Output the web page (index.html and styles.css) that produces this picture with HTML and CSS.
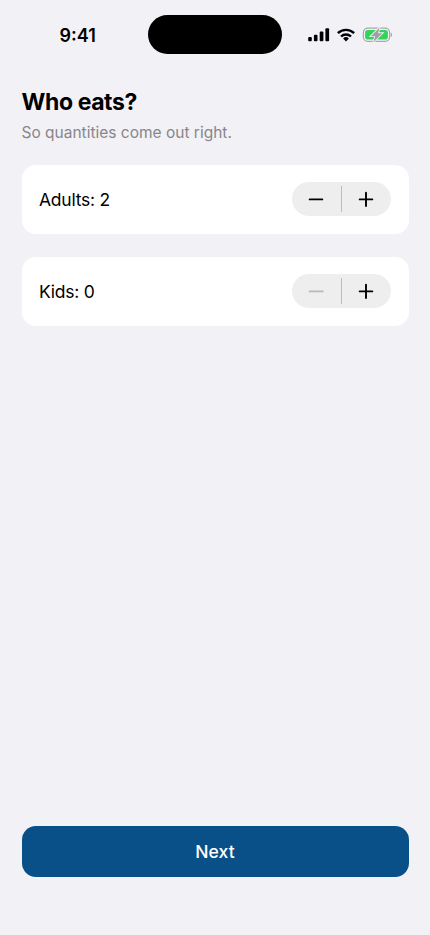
FILE: index.html
```html
<!DOCTYPE html>
<html lang="en">
<head>
<meta charset="utf-8">
<meta name="viewport" content="width=device-width, initial-scale=1">
<title>Who eats?</title>
<link rel="stylesheet" href="styles.css">
</head>
<body>
<div class="screen">
  <header class="status">
    <div class="clock"><span class="clock-text">9:41</span></div>
    <div class="island"></div>
    <svg class="indicators" width="88" height="16" viewBox="307 27 88 16">
      <g fill="#000">
        <rect x="308.2" y="37" width="3.6" height="4.2" rx="1"/>
        <rect x="313.9" y="34.8" width="3.6" height="6.4" rx="1"/>
        <rect x="319.7" y="31.6" width="3.7" height="9.6" rx="1"/>
        <rect x="325.4" y="28.2" width="3.7" height="13" rx="1"/>
      </g>
      <g fill="none" stroke="#000" stroke-width="2.4">
        <path d="M337.9 33.2a11.6 11.6 0 0 1 16.2 0"/>
        <path d="M341 36.5a7.2 7.2 0 0 1 10 0"/>
      </g>
      <path d="M343.1 38.5a4.2 4.2 0 0 1 5.8 0L346 41.4z"/>
      <rect x="363.4" y="28.2" width="26.2" height="13.1" rx="4.4" fill="none" stroke="#a9a8ad" stroke-width="1.2"/>
      <rect x="365.1" y="29.9" width="22.8" height="9.7" rx="2.8" fill="#34d15b"/>
      <path d="M390.7 32.5c1.9.7 1.9 3.9 0 4.6z" fill="#a9a8ad"/>
      <path d="M379.6 27.4L370.8 36.2H375.2L373.4 42.2L382.4 33.2H378z" fill="#a09fa4" stroke="#f2f1f6" stroke-width="1.7" paint-order="stroke"/>
    </svg>
  </header>
  <main class="content">
    <h1 class="title">Who eats?</h1>
    <p class="subtitle">So quantities come out right.</p>
    <section class="card">
      <span class="label adults">Adults: 2</span>
      <div class="stepper">
        <button class="step" aria-label="Fewer adults"><svg width="16" height="16" viewBox="0 0 16 16"><path d="M1.7 8.4H14.3"/></svg></button>
        <span class="divider"></span>
        <button class="step" aria-label="More adults"><svg width="16" height="16" viewBox="0 0 16 16"><path d="M1.7 8.4H14.3M8 1.8V15"/></svg></button>
      </div>
    </section>
    <section class="card">
      <span class="label kids">Kids: 0</span>
      <div class="stepper">
        <button class="step" aria-label="Fewer kids" disabled><svg width="16" height="16" viewBox="0 0 16 16"><path d="M1.5 8.4H14.8"/></svg></button>
        <span class="divider"></span>
        <button class="step" aria-label="More kids"><svg width="16" height="16" viewBox="0 0 16 16"><path d="M1.7 8.4H14.3M8 1.8V15"/></svg></button>
      </div>
    </section>
  </main>
  <button class="next">Next</button>
</div>
</body>
</html>
```
FILE: styles.css
```css
* { box-sizing: border-box; }
body {
  margin: 0;
  background: #f2f1f6;
  color: #000;
  font-family: Inter, "Liberation Sans", sans-serif;
}
button { border: 0; padding: 0; font-family: inherit; }
.screen {
  height: 935px;
  padding: 15px 21.5px 58px;
  display: flex;
  flex-direction: column;
}
.status {
  height: 39px;
  display: grid;
  grid-template-columns: 126.5px 134px 1fr;
  align-items: center;
}
.clock { padding: 2px 0 0 38px; }
.clock-text { font-size: 18px; font-weight: 600; letter-spacing: 0; }
.island { height: 39px; border-radius: 20px; background: #000; }
.indicators { margin-left: 25px; }
.content { flex: 1; padding-top: 33px; }
.title {
  margin: 0;
  font-size: 23px;
  line-height: 30px;
  font-weight: 700;
  letter-spacing: -0.4px;
}
.subtitle {
  margin: 5px 0 21px;
  font-size: 15.5px;
  line-height: 22px;
  color: #87868b;
}
.card {
  height: 68.5px;
  margin-bottom: 23.5px;
  padding: 0 17.5px;
  border-radius: 14px;
  background: #fff;
  display: flex;
  align-items: center;
  justify-content: space-between;
}
.label {
  padding-top: 2px;
  font-size: 17.5px;
  line-height: 24px;
  letter-spacing: -0.25px;
}
.stepper {
  width: 99.5px;
  height: 34px;
  border-radius: 17px;
  background: #eeeeee;
  display: flex;
  align-items: center;
}
.step {
  flex: 1;
  height: 34px;
  background: none;
  display: flex;
  align-items: center;
  justify-content: center;
}
.step svg { fill: none; stroke: #000; stroke-width: 1.9; stroke-linecap: round; }
.step:disabled svg { stroke: #b9b9b9; }
.divider { width: 1px; height: 26px; background: #bdbdbf; }
.next {
  height: 51.5px;
  border-radius: 14px;
  background: #085087;
  color: #fff;
  font-size: 17.5px;
  font-weight: 500;
  letter-spacing: 0.1px;
}
```
